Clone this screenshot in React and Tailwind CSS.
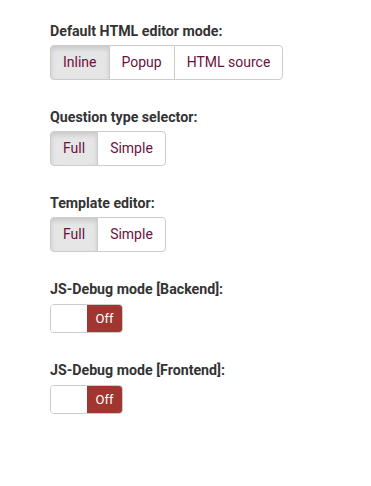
const groups = [
    { label: "Default HTML editor mode:", options: ["Inline", "Popup", "HTML source"] },
    { label: "Question type selector:", options: ["Full", "Simple"] },
    { label: "Template editor:", options: ["Full", "Simple"] },
];

const toggles = ["JS-Debug mode [Backend]:", "JS-Debug mode [Frontend]:"];

function ButtonGroup({ options }) {
    return (
        <div className="flex">
            {options.map((opt, i) => (
                <div
                    key={opt}
                    className={`h-[35px] px-3 flex items-center text-[14px] text-[#6b1140] border border-[#cccccc] ${i === 0
                        ? "bg-[#e6e6e6] shadow-[inset_0_3px_5px_rgba(0,0,0,0.125)] rounded-l"
                        : "bg-white -ml-px"
                        } ${i === options.length - 1 ? "rounded-r" : ""}`}
                >
                    {opt}
                </div>
            ))}
        </div>
    );
}

function Toggle() {
    return (
        <div className="flex w-[73px] h-[29px] border border-[#cccccc] rounded overflow-hidden">
            <div className="w-[36px] bg-white" />
            <div className="flex-1 bg-[#a13630] text-white text-[13px] flex items-center justify-center">
                Off
            </div>
        </div>
    );
}

export default function App() {
    return (
        <div className="min-h-[486px] bg-white pt-[21px] pl-[50px] font-['Roboto',sans-serif]">
            {groups.map((g) => (
                <div key={g.label} className="mb-[27px]">
                    <div className="text-[14.2px] leading-5 font-bold text-[#333333] mb-1">{g.label}</div>
                    <ButtonGroup options={g.options} />
                </div>
            ))}
            {toggles.map((t) => (
                <div key={t} className="mb-[27px]">
                    <div className="text-[14.2px] leading-5 font-bold text-[#333333] mb-[5px]">{t}</div>
                    <Toggle />
                </div>
            ))}
        </div>
    );
}
